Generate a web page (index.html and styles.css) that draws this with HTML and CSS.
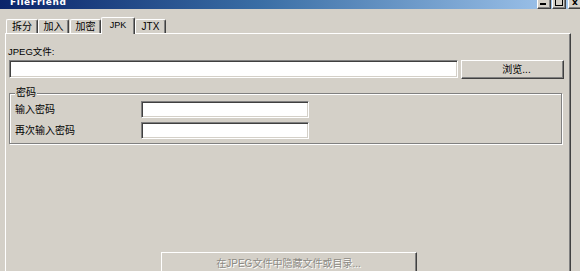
FILE: index.html
```html
<!DOCTYPE html>
<html>
<head>
<meta charset="utf-8">
<link rel="stylesheet" href="styles.css">
</head>
<body>
<div class="window">
  <div class="titlebar">
    <span class="title">FileFriend</span>
    <div class="tbtns">
      <span class="tb"><span class="g-min"></span></span>
      <span class="tb"><span class="g-max"></span></span>
      <span class="tb close"><span class="g-x">x</span></span>
    </div>
  </div>
  <div class="tabs">
    <div class="tab w32">拆分</div>
    <div class="tab w31">加入</div>
    <div class="tab w31 gap">加密</div>
    <div class="tab sel">JPK</div>
    <div class="tab w31">JTX</div>
  </div>
  <div class="panel">
    <div class="lbl">JPEG文件:</div>
    <div class="filerow">
      <div class="field grow"></div>
      <div class="btn browse">浏览...</div>
    </div>
    <fieldset class="group">
      <legend class="legend">密码</legend>
      <div class="row"><span class="rlabel">输入密码</span><div class="field pw"></div></div>
      <div class="row r2"><span class="rlabel">再次输入密码</span><div class="field pw"></div></div>
    </fieldset>
    <div class="bottom">
      <div class="btn action disabled">在JPEG文件中隐藏文件或目录...</div>
    </div>
  </div>
</div>
</body>
</html>
```

FILE: styles.css
```css
html, body {
  margin: 0;
  padding: 0;
  width: 580px;
  height: 271px;
  overflow: hidden;
  background: #d4d0c8;
}
body {
  font-family: "Liberation Sans", "Noto Sans CJK SC", sans-serif;
  font-size: 10px;
  color: #000;
}
.window {
  width: 580px;
}
.titlebar {
  height: 9px;
  background: linear-gradient(to right, #0a246a 0%, #3a6ea5 45%, #a6caf0 100%);
  display: flex;
  align-items: flex-end;
  justify-content: space-between;
  overflow: hidden;
  box-sizing: border-box;
}
.title {
  color: #fff;
  font-family: "DejaVu Sans", sans-serif;
  font-weight: bold;
  font-size: 9px;
  letter-spacing: 0.6px;
  line-height: 9px;
  margin-left: 10px;
  margin-bottom: 2px;
}
.tbtns {
  display: flex;
  align-items: flex-end;
  height: 9px;
  margin-right: -2px;
}
.tb {
  width: 14px;
  height: 12px;
  background: #d4d0c8;
  box-sizing: border-box;
  border-right: 1px solid #404040;
  border-bottom: 1px solid #404040;
  border-left: 1px solid #fff;
  box-shadow: inset -1px -1px #808080;
  display: flex;
  align-items: flex-end;
  justify-content: center;
  overflow: hidden;
}
.tb + .tb { margin-left: 1px; }
.tb.close { margin-left: 2px; }
.g-min {
  width: 6px;
  height: 2px;
  background: #000;
  margin-bottom: 3px;
  margin-right: 2px;
}
.g-max {
  width: 8px;
  height: 9px;
  box-sizing: border-box;
  border: 1px solid #000;
  border-top-width: 2px;
  margin-bottom: 2px;
}
.g-x {
  font-family: "DejaVu Sans", sans-serif;
  font-weight: bold;
  font-size: 9px;
  line-height: 8px;
  margin-bottom: 2px;
}
.tabs {
  display: flex;
  align-items: flex-end;
  margin-top: 8px;
  padding-left: 6px;
  height: 16px;
  position: relative;
  z-index: 1;
}
.tab {
  height: 14px;
  box-sizing: border-box;
  border-top: 1px solid #fff;
  border-left: 1px solid #fff;
  border-right: 1px solid #404040;
  box-shadow: inset -1px 0 #808080;
  border-radius: 2px 2px 0 0;
  display: flex;
  align-items: center;
  justify-content: center;
  line-height: 12px;
  font-size: 10px;
  padding-top: 1px;
}
.w32 { width: 32px; }
.w31 { width: 31px; }
.gap { margin-left: 1px; }
.tab.sel {
  width: 34px;
  height: 17px;
  margin-bottom: -1px;
  background: #d4d0c8;
  padding-top: 0;
  padding-bottom: 2px;
  font-size: 9px;
}
.panel {
  margin-left: 5px;
  width: 566px;
  height: 300px;
  box-sizing: border-box;
  border-top: 1px solid #fff;
  border-left: 1px solid #fff;
  border-right: 1px solid #404040;
  box-shadow: inset -1px 0 #808080;
  padding: 12px 6px 0 3px;
}
.lbl {
  line-height: 12px;
  height: 12px;
  font-size: 9.5px;
  margin-left: -1px;
}
.filerow {
  display: flex;
  margin-top: 2px;
  gap: 3px;
}
.field {
  height: 18px;
  background: #fff;
  box-sizing: border-box;
  border-top: 1px solid #808080;
  border-left: 1px solid #808080;
  border-bottom: 1px solid #fff;
  border-right: 1px solid #fff;
  box-shadow: inset 1px 1px #404040, inset -1px -1px #d4d0c8;
}
.grow { flex: 1; }
.btn {
  box-sizing: border-box;
  border-top: 1px solid #fff;
  border-left: 1px solid #fff;
  border-bottom: 1px solid #404040;
  border-right: 1px solid #404040;
  box-shadow: inset -1px -1px #808080;
  background: #d4d0c8;
  display: flex;
  align-items: center;
  justify-content: center;
  line-height: 12px;
}
.browse {
  width: 103px;
  height: 19px;
  padding-left: 8px;
}
.group {
  margin: 8px 2px 0 0;
  padding: 2px 5px 4px 5px;
  border: 1px solid #808080;
  box-shadow: inset 1px 1px #fff, 1px 1px #fff;
  min-width: 0;
}
.legend {
  line-height: 12px;
  padding: 0 1px;
  margin-left: 0;
  background: #d4d0c8;
}
.row {
  display: flex;
  align-items: center;
  height: 17px;
}
.r2 { margin-top: 4px; }
.rlabel {
  width: 126px;
  line-height: 12px;
}
.field.pw {
  width: 168px;
  height: 17px;
}
.bottom {
  display: flex;
  justify-content: center;
  margin-top: 108px;
  padding-left: 4px;
}
.action {
  width: 256px;
  height: 22px;
  align-items: flex-start;
  padding-top: 5px;
}
.disabled {
  color: #8c8a84;
  text-shadow: 1px 1px #fff;
}
```
